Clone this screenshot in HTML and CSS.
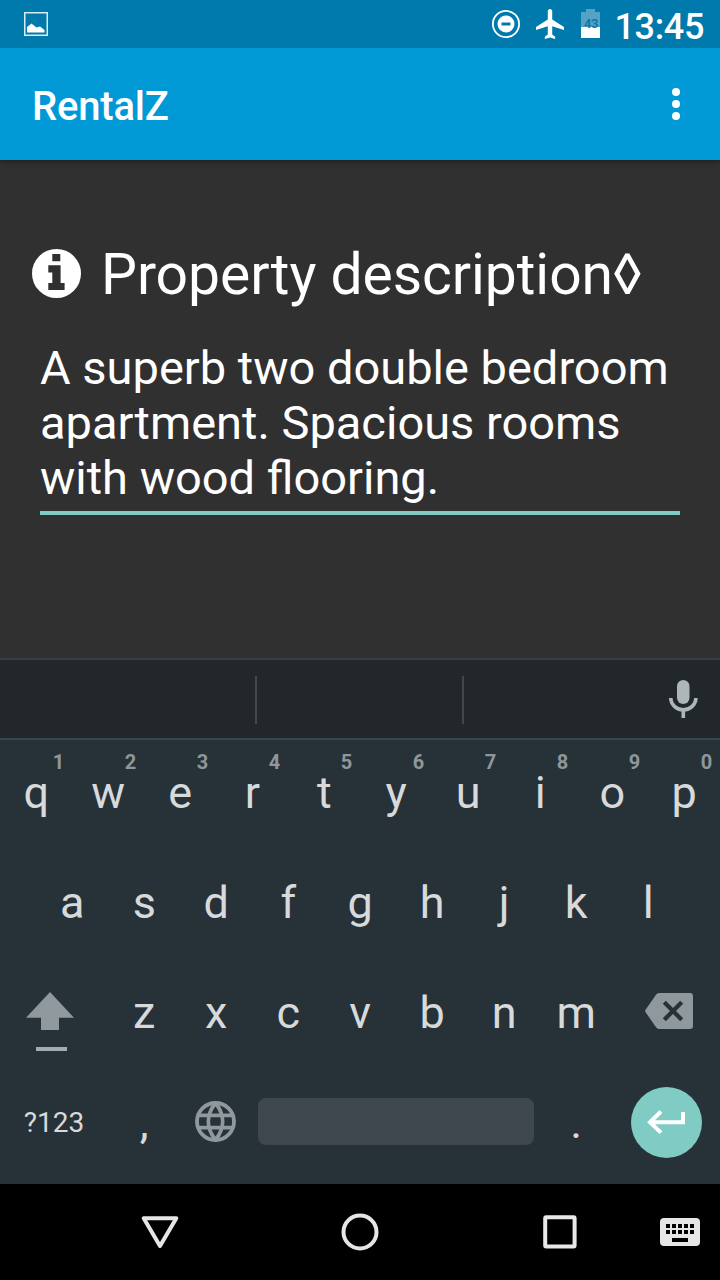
FILE: index.html
```html
<!DOCTYPE html>
<html lang="en">
<head>
<meta charset="utf-8">
<title>RentalZ</title>
<link rel="stylesheet" href="styles.css">
</head>
<body>
<div class="screen">
  <header class="status">
    <svg class="status-photo" width="24" height="24" viewBox="0 0 24 24"><rect x=".75" y=".75" width="22.500" height="22.500" fill="none" stroke="#d9ebf3" stroke-width="1.500"/><path d="M3 20.500V15L7.500 11.500L12.500 15.500L16 14.500L20.500 18V20.500Z" fill="#fff"/></svg>
    <div class="status-right">
      <svg width="28" height="28" viewBox="0 0 28 28"><circle cx="14" cy="14" r="13.100" fill="none" stroke="#fff" stroke-width="1.800"/><path fill="#fff" fill-rule="evenodd" d="M14 5.500a8.500 8.500 0 1 0 0 17a8.500 8.500 0 0 0 0-17zM9.500 12.500h9v3h-9z"/></svg>
      <svg class="plane" width="28" height="30" viewBox="2 2 19 20" preserveAspectRatio="none"><path fill="#fff" d="M21 16v-2l-8-5V3.500c0-.83-.67-1.500-1.500-1.500S10 2.670 10 3.500V9l-8 5v2l8-2.500V19l-2 1.500V22l3.500-1 3.500 1v-1.500L13 19v-5.500l8 2.500z"/></svg>
      <div class="battery">
        <svg width="19" height="29" viewBox="0 0 19 29"><path fill="#52a3c6" d="M5 0h9v3h5v15H0V3h5z"/><path fill="#fff" d="M0 18h19v11H0z"/></svg>
        <span class="battery-level">43</span>
      </div>
      <span class="clock">13:45</span>
    </div>
  </header>
  <div class="appbar">
    <h1 class="title">RentalZ</h1>
    <svg width="8" height="32" viewBox="0 0 8 32" fill="#fff"><circle cx="4" cy="4" r="4"/><circle cx="4" cy="16" r="4"/><circle cx="4" cy="28" r="4"/></svg>
  </div>
  <main class="content">
    <div class="heading">
      <svg width="49" height="49" viewBox="0 0 49 49"><circle cx="24.500" cy="24.500" r="24.500" fill="#fff"/><path fill="#303030" d="M20.300 5h8v7.200h-8zM16.300 16.300h12.300V34h4V41H16.300v-7h4V23.500h-4z"/></svg>
      <h2 class="heading-text">Property description◊</h2>
    </div>
    <div class="field">A superb two double bedroom apartment. Spacious rooms with wood flooring.</div>
  </main>
  <div class="suggestions">
    <div class="slot slot-first"></div>
    <div class="slot slot-middle"></div>
    <svg width="29" height="38" viewBox="0 0 29 38"><rect x="8" y="0" width="12.500" height="24" rx="6.250" fill="#adb6b9"/><path d="M1.700 18a12.600 11.800 0 0 0 25.200 0M14.300 29v9" fill="none" stroke="#adb6b9" stroke-width="3.600"/></svg>
  </div>
  <div class="keyboard">
    <div class="row row-top">
      <div class="key">q<sup class="hint">1</sup></div><div class="key">w<sup class="hint">2</sup></div><div class="key">e<sup class="hint">3</sup></div><div class="key">r<sup class="hint">4</sup></div><div class="key">t<sup class="hint">5</sup></div><div class="key">y<sup class="hint">6</sup></div><div class="key">u<sup class="hint">7</sup></div><div class="key">i<sup class="hint">8</sup></div><div class="key">o<sup class="hint">9</sup></div><div class="key">p<sup class="hint">0</sup></div>
    </div>
    <div class="row row-home">
      <div class="key">a</div><div class="key">s</div><div class="key">d</div><div class="key">f</div><div class="key">g</div><div class="key">h</div><div class="key">j</div><div class="key">k</div><div class="key">l</div>
    </div>
    <div class="row">
      <div class="key key-shift"><svg width="48" height="60" viewBox="0 0 48 60"><path fill="#8e989d" d="M24 0L48 25.700H33V38H15V25.700H0z"/><path fill="#a3adb0" d="M10 55h31v4H10z"/></svg></div>
      <div class="key">z</div><div class="key">x</div><div class="key">c</div><div class="key">v</div><div class="key">b</div><div class="key">n</div><div class="key">m</div>
      <div class="key key-delete"><svg width="48" height="36" viewBox="0 0 48 36"><path fill="#8e989d" d="M14 0H45a3 3 0 0 1 3 3V33a3 3 0 0 1-3 3H14a4 4 0 0 1-3-1.800L.4 19a2 2 0 0 1 0-2L11 1.800A4 4 0 0 1 14 0z"/><path d="M19.300 9.300L36.700 26.700M36.700 9.300L19.300 26.700" stroke="#263238" stroke-width="4.200"/></svg></div>
    </div>
    <div class="row row-bottom">
      <div class="key key-symbols">?123</div>
      <div class="key">,</div>
      <div class="key key-globe"><svg width="41" height="41" viewBox="0 0 41 41" fill="none" stroke="#8e989d" stroke-width="3.800"><circle cx="20.500" cy="20.500" r="18.500"/><path d="M20.500 2C11 14 11 27 20.500 39C30 27 30 14 20.500 2M3 14.300H38M3 26.700H38"/></svg></div>
      <div class="space"></div>
      <div class="key">.</div>
      <div class="enter"><svg width="38" height="24" viewBox="0 0 38 24" fill="none" stroke="#fff" stroke-width="4"><path d="M36 2V12.200H3M14 1.500L3 12.200L14 22.700"/></svg></div>
    </div>
  </div>
  <nav class="navbar">
    <svg width="40" height="36" viewBox="0 0 40 36"><path d="M3.700 4.200H36.300L20 32z" fill="none" stroke="#e6e6e6" stroke-width="4" stroke-linejoin="round"/></svg>
    <svg width="38" height="38" viewBox="0 0 38 38"><circle cx="19" cy="19" r="16.500" fill="none" stroke="#e6e6e6" stroke-width="4"/></svg>
    <svg width="34" height="34" viewBox="0 0 34 34"><rect x="2.200" y="2.200" width="29.400" height="29.400" rx="1" fill="none" stroke="#e9e9e9" stroke-width="4"/></svg>
    <svg width="40" height="28" viewBox="0 0 40 28"><rect width="40" height="28" rx="4" fill="#e6e6e6"/><path d="M6 8h28M6 14h28" stroke="#000" stroke-width="4" stroke-dasharray="4 2"/><path d="M12 20h16v4H12z"/></svg>
  </nav>
</div>
</body>
</html>
```
FILE: styles.css
```css
* { box-sizing: border-box; }
body { margin: 0; background: #303030; font-family: Roboto, "DejaVu Sans", sans-serif; color: #fff; }
svg { display: block; flex: none; }
h1, h2 { margin: 0; }
.screen { width: 720px; height: 1280px; display: flex; flex-direction: column; overflow: hidden; }
.status { height: 48px; flex: none; background: #007aac; display: flex; align-items: center; justify-content: space-between; padding: 0 16px 0 24px; }
.status-right { display: flex; align-items: center; }
.plane { margin-left: 16px; }
.battery { display: grid; place-items: center; margin-left: 17px; padding-bottom: 1px; }
.battery > * { grid-area: 1 / 1; }
.battery-level { font-size: 13px; font-weight: 700; line-height: 15px; letter-spacing: -0.5px; color: #1478a6; }
.clock { font-size: 36px; font-weight: 500; line-height: 42px; letter-spacing: -0.35px; margin-left: 14px; padding-top: 6px; }
.appbar { height: 112px; flex: none; background: #0099d6; display: flex; align-items: center; justify-content: space-between; padding: 0 40px 0 32px; box-shadow: 0 3px 4px rgba(0,0,0,.25); }
.title { font-size: 40px; font-weight: 500; line-height: 48px; letter-spacing: -0.2px; padding-top: 6px; }
.content { height: 498px; flex: none; padding: 80px 40px 0 32px; }
.heading { display: flex; align-items: center; gap: 20px; height: 67px; }
.heading-text { font-size: 57px; font-weight: 400; line-height: 67px; letter-spacing: -0.06px; padding-top: 2px; white-space: nowrap; }
.field { margin: 33px 0 0 8px; width: 640px; height: 175px; font-size: 47px; line-height: 55px; border-bottom: 4px solid #80cbc4; }
.suggestions { height: 82px; flex: none; background: #22272b; border-top: 2px solid #374046; border-bottom: 2px solid #3a464c; display: flex; align-items: center; }
.slot { height: 48px; border-right: 2px solid #42484c; margin-top: 2px; }
.slot-first { width: 257px; }
.slot-middle { width: 207px; margin-right: 205px; }
.keyboard { height: 444px; flex: none; background: #263238; color: #d8d9db; font-size: 45px; line-height: 52px; }
.row { display: flex; height: 110px; align-items: center; }
.row-top { height: 108px; padding-bottom: 2px; }
.row-home { padding: 0 36px; }
.key { width: 72px; height: 100%; display: flex; align-items: center; justify-content: center; position: relative; padding-left: 0.5px; }
.hint { position: absolute; left: 51.5px; top: 10px; width: 14px; text-align: center; font-size: 20px; line-height: 24px; font-weight: 700; color: #90979a; }
.key-shift { width: 108px; padding: 17px 8px 0 0; }
.key-delete { width: 108px; padding: 0 0 4px 6px; }
.key-symbols { width: 108px; padding-left: 0; font-size: 28px; }
.key-globe { padding: 0 1px 4px 0; }
.space { width: 276px; height: 47px; margin: 0 6px 3px; border-radius: 8px; background: #3d474d; }
.enter { width: 71px; height: 71px; border-radius: 50%; background: #80cbc4; margin: 0 0 2px 18.5px; padding-right: 1px; display: flex; align-items: center; justify-content: center; }
.navbar { height: 96px; flex: none; background: #000; display: flex; align-items: center; padding-left: 140px; }
.navbar svg:nth-child(2) { margin-left: 161px; }
.navbar svg:nth-child(3) { margin-left: 164px; }
.navbar svg:nth-child(4) { margin-left: 83px; }
```
